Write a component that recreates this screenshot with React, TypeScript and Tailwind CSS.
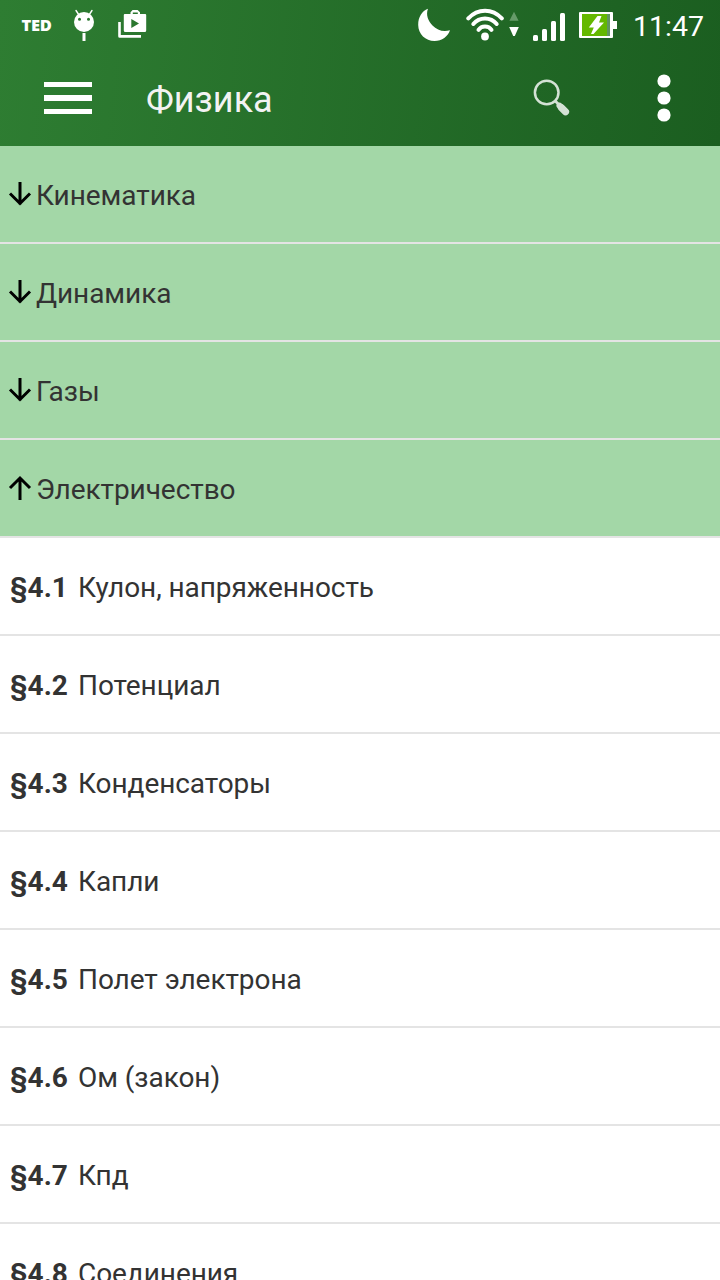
const groups = [
  { title: "Кинематика", open: false },
  { title: "Динамика", open: false },
  { title: "Газы", open: false },
  { title: "Электричество", open: true },
];

const lessons = [
  { no: "§4.1", title: "Кулон, напряженность" },
  { no: "§4.2", title: "Потенциал" },
  { no: "§4.3", title: "Конденсаторы" },
  { no: "§4.4", title: "Капли" },
  { no: "§4.5", title: "Полет электрона" },
  { no: "§4.6", title: "Ом (закон)" },
  { no: "§4.7", title: "Кпд" },
  { no: "§4.8", title: "Соединения" },
];

function StatusBar() {
  return (
    <div className="flex h-[50px] items-start text-white">
      <span className="ml-[21.5px] mt-[15px] w-[52.5px] font-['Open_Sans',sans-serif] text-[16.5px] leading-[20px] font-extrabold tracking-[-0.3px]">
        TED
      </span>
      <svg className="mt-[8px] h-[34px] w-[20px]" viewBox="0 0 20 34" fill="currentColor">
        <path d="M2 2.5 5 7M18 2.5 15 7" stroke="currentColor" strokeWidth="1.4" strokeLinecap="round" />
        <circle cx="10" cy="14" r="10" />
        <circle cx="5.5" cy="11.3" r="1.5" fill="#2b7930" />
        <circle cx="14.5" cy="11.3" r="1.5" fill="#2b7930" />
        <path d="M8.5 25h3v8h-3z" />
      </svg>
      <svg className="ml-[24px] mt-[9px] h-[30px] w-[29px]" viewBox="0 0 29 30" fill="currentColor">
        <path d="M.2 13h2.6v13H23v2.8H1.700Q.2 28.800.2 27.300Z" />
        <path
          fillRule="evenodd"
          d="M12.500 5V3.300L14.600 1h5L22 3.300V5h5.200q1 0 1 1v15.500q0 1.500-1.500 1.500H7.300q-1.500 0-1.500-1.500V6q0-1 1-1ZM14.800 5h5V3.500H14.800ZM13.300 10v9l7.700-4.500Z"
        />
      </svg>
      <svg className="ml-[270px] mt-[8px] h-[34px] w-[34px]" viewBox="0 0 34 34" fill="currentColor">
        <path d="M11 .8C8.500 7 11.500 13.500 15.500 17.500C20 22 26 24.500 33 22.300C31 28.500 25 33 17.500 33C8.500 33 1.200 26 1.200 17C1.200 9 5 3 11 .8Z" />
      </svg>
      <svg className="ml-[15px] mt-[8px] h-[34px] w-[40px]" viewBox="0 0 40 34" fill="none" stroke="currentColor" strokeLinecap="round">
        <path d="M2 10C11.500-.2 26-.2 35.500 10" strokeWidth="4" transform="translate(.3 .4)" />
        <path d="M7.300 16C13.500 8.600 24.500 8.600 30.700 16" strokeWidth="4" />
        <path d="M12.500 21.800C15.500 17.300 22.500 17.300 25.500 21.800" strokeWidth="4" />
        <circle cx="19" cy="28.500" r="3.900" fill="currentColor" stroke="none" />
      </svg>
      <svg className="ml-[3px] mt-[11px] h-[27px] w-[10px]" viewBox="0 0 10 27">
        <path d="M5 .8 9.600 9.700H.4Z" fill="#669b69" />
        <path d="M.2 16h9.600L5.800 25H4.200Z" fill="#fff" />
      </svg>
      <svg className="ml-[14px] mt-[13px] h-[28px] w-[33px]" viewBox="0 0 33 28" fill="currentColor">
        <rect x="0" y="22" width="5" height="6" rx="1.500" />
        <rect x="9" y="16" width="5" height="12" rx="1.500" />
        <rect x="18" y="8" width="5" height="20" rx="1.500" />
        <rect x="27" y="0" width="5" height="28" rx="1.500" />
      </svg>
      <svg className="ml-[13px] mt-[12px] h-[26px] w-[38px]" viewBox="0 0 38 26">
        <path d="M1 0h32q1 0 1 1v8h4v8h-4v8q0 1-1 1H1q-1 0-1-1V1q0-1 1-1Z" fill="#fff" />
        <path d="M3 2h25v22H3z" fill="#64b800" />
        <path d="M28 2h3v22h-3z" fill="#60955f" />
        <path d="M18.500 4H22.500L20 10.500H25L14.500 22H12L14.800 15.500H9.800Z" fill="#fff" />
      </svg>
      <span className="ml-[16px] mt-[9px] text-[28.5px] leading-[36px] font-normal">11:47</span>
    </div>
  );
}

function Toolbar() {
  return (
    <div className="flex h-[96px] items-start">
      <button aria-label="Меню" className="ml-[44px] mt-[32px] flex w-[48px] flex-col gap-[8px]">
        <span className="h-[5.300px] w-full bg-white" />
        <span className="h-[5.300px] w-full bg-white" />
        <span className="h-[5.300px] w-full bg-white" />
      </button>
      <h1 className="ml-[54px] mt-[28px] w-[386px] text-[36px] leading-[44px] text-[#f3f3f3]">Физика</h1>
      <button aria-label="Поиск" className="mt-[29px]">
        <svg className="h-[40px] w-[40px]" viewBox="0 0 40 40" fill="none" stroke="#d4e2d5">
          <circle cx="14.700" cy="13.500" r="11.800" strokeWidth="2.500" />
          <path d="m23 21.800 4 4" strokeWidth="2.800" />
          <path d="m27.500 26.700 6.200 6.200" strokeWidth="6" strokeLinecap="round" />
          <path d="m29.500 28.700 4 4" strokeWidth="7.200" strokeLinecap="round" />
        </svg>
      </button>
      <button aria-label="Ещё" className="ml-[85px] mt-[23px]">
        <svg className="h-[52px] w-[14px]" viewBox="0 0 14 52" fill="#fff">
          <circle cx="7" cy="8" r="6.600" />
          <circle cx="7" cy="25" r="6.600" />
          <circle cx="7" cy="42" r="6.600" />
        </svg>
      </button>
    </div>
  );
}

function Arrow({ up }: { up: boolean }) {
  return (
    <svg className="h-[26px] w-[24px]" viewBox="0 0 24 26" fill="none" stroke="#000" strokeWidth="3">
      {up ? <path d="M12 25V2.500M2 13 12 3l10 10" /> : <path d="M12 1v22.500M2 12.500l10 10 10-10" />}
    </svg>
  );
}

export default function App() {
  return (
    <div className="h-[1280px] w-[720px] overflow-hidden bg-white font-[Roboto,sans-serif] text-[#333333]">
      <header className="bg-[linear-gradient(96deg,#2e7d32,#1b5e20)]">
        <StatusBar />
        <Toolbar />
      </header>
      <ul className="text-[28px] leading-[34px] tracking-[-0.06px]">
        {groups.map((g) => (
          <li key={g.title} className="flex h-[98px] items-center border-b-2 border-[#e4e4e4] bg-[#a3d7a7] pl-[8px]">
            <Arrow up={g.open} />
            <span className="ml-[4px] mt-[4px]">{g.title}</span>
          </li>
        ))}
        {lessons.map((l) => (
          <li key={l.no} className="flex h-[98px] items-center border-b-2 border-[#e4e4e4] pl-[10px]">
            <span className="mt-[4px] w-[68px] font-bold tracking-normal">{l.no}</span>
            <span className="mt-[4px]">{l.title}</span>
          </li>
        ))}
      </ul>
    </div>
  );
}
